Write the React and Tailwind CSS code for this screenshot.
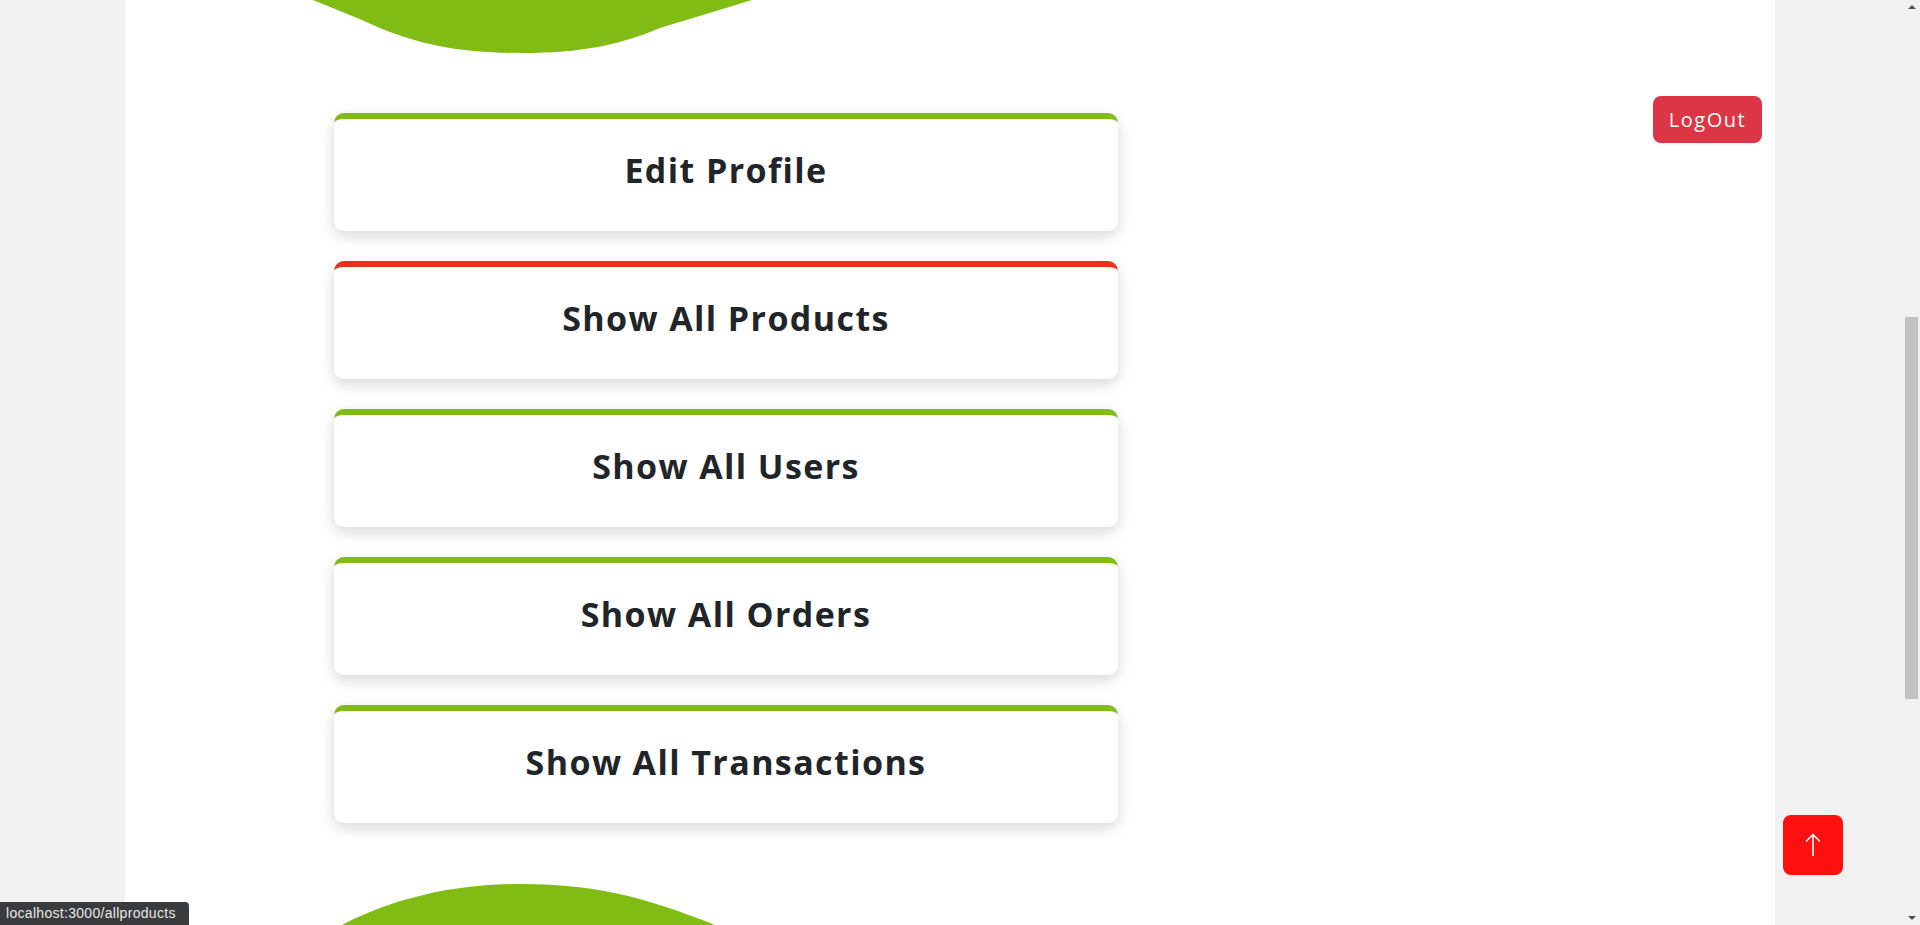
import React from 'react';

const cards = [
  { title: 'Edit Profile', color: 'border-t-[#80bc13]' },
  { title: 'Show All Products', color: 'border-t-[#e8301a]' },
  { title: 'Show All Users', color: 'border-t-[#80bc13]' },
  { title: 'Show All Orders', color: 'border-t-[#80bc13]' },
  { title: 'Show All Transactions', color: 'border-t-[#80bc13]' },
];

const App = () => {
  return (
    <div className="flex h-[925px] w-full overflow-hidden bg-[#f1f1f1] font-['Open_Sans',sans-serif]">
      <div className="flex-1">
        {/* White page container */}
        <div className="ml-[125px] flex h-full w-[1650px] flex-col bg-white">
          {/* Top wave */}
          <svg width="1650" height="60" viewBox="0 0 1650 60" className="block shrink-0">
            <path
              d="M188 0 L237 20 C295 48 345 53 398 53 C455 53 495 45 535 28 L627 0 Z"
              fill="#80bc13"
            />
          </svg>

          <div className="flex items-start justify-between">
            {/* Cards */}
            <div className="ml-[209px] flex w-[784px] flex-col gap-[30px] pt-[53px]">
              {cards.map((card) => (
                <a
                  key={card.title}
                  href="#"
                  className={`flex h-[118px] items-center justify-center rounded-[10px] border-t-[6px] bg-white shadow-[0_5px_15px_rgba(0,0,0,0.16)] ${card.color}`}
                >
                  <span className="-mt-[10px] text-[34px] font-bold leading-none tracking-[1.4px] text-[#212529]">
                    {card.title}
                  </span>
                </a>
              ))}
            </div>

            {/* LogOut */}
            <button className="mr-[13px] mt-[36px] h-[47px] w-[109px] rounded-[8px] bg-[#dc3545] text-[20px] tracking-[1.5px] text-white">
              LogOut
            </button>
          </div>

          <div className="flex-1" />

          {/* Bottom wave */}
          <svg width="1650" height="41" viewBox="0 0 1650 41" className="block shrink-0">
            <path d="M217 41 C255 21 315 0 395 0 C465 0 515 11 590 41 Z" fill="#80bc13" />
          </svg>
        </div>
      </div>

      {/* Scrollbar */}
      <div className="flex w-[17px] flex-col items-center bg-[#f1f1f1]">
        <div className="mt-[5px] h-0 w-0 border-x-[4px] border-b-[4px] border-x-transparent border-b-[#505050]" />
        <div className="mt-[308px] h-[382px] w-[13px] bg-[#c1c1c1]" />
        <div className="flex-1" />
        <div className="mb-[5px] h-0 w-0 border-x-[4px] border-t-[4px] border-x-transparent border-t-[#505050]" />
      </div>

      {/* Scroll to top */}
      <button className="fixed bottom-[50px] right-[77px] flex h-[60px] w-[60px] items-center justify-center rounded-[8px] bg-[#fe1010]">
        <svg width="16" height="24" viewBox="0 0 16 24" fill="none" stroke="white" strokeWidth="1.6" strokeLinecap="round" strokeLinejoin="round">
          <path d="M8 1.5 V22.5" />
          <path d="M1.5 8 L8 1.5 L14.5 8" />
        </svg>
      </button>

      {/* Status bubble */}
      <div className="fixed bottom-0 left-0 flex h-[23px] w-[189px] items-center rounded-tr-[4px] bg-[#3a3b3d] pl-[6px] font-['Liberation_Sans',sans-serif] text-[14px] tracking-[0.3px] text-[#e8e8e8]">
        localhost:3000/allproducts
      </div>
    </div>
  );
};

export default App;
